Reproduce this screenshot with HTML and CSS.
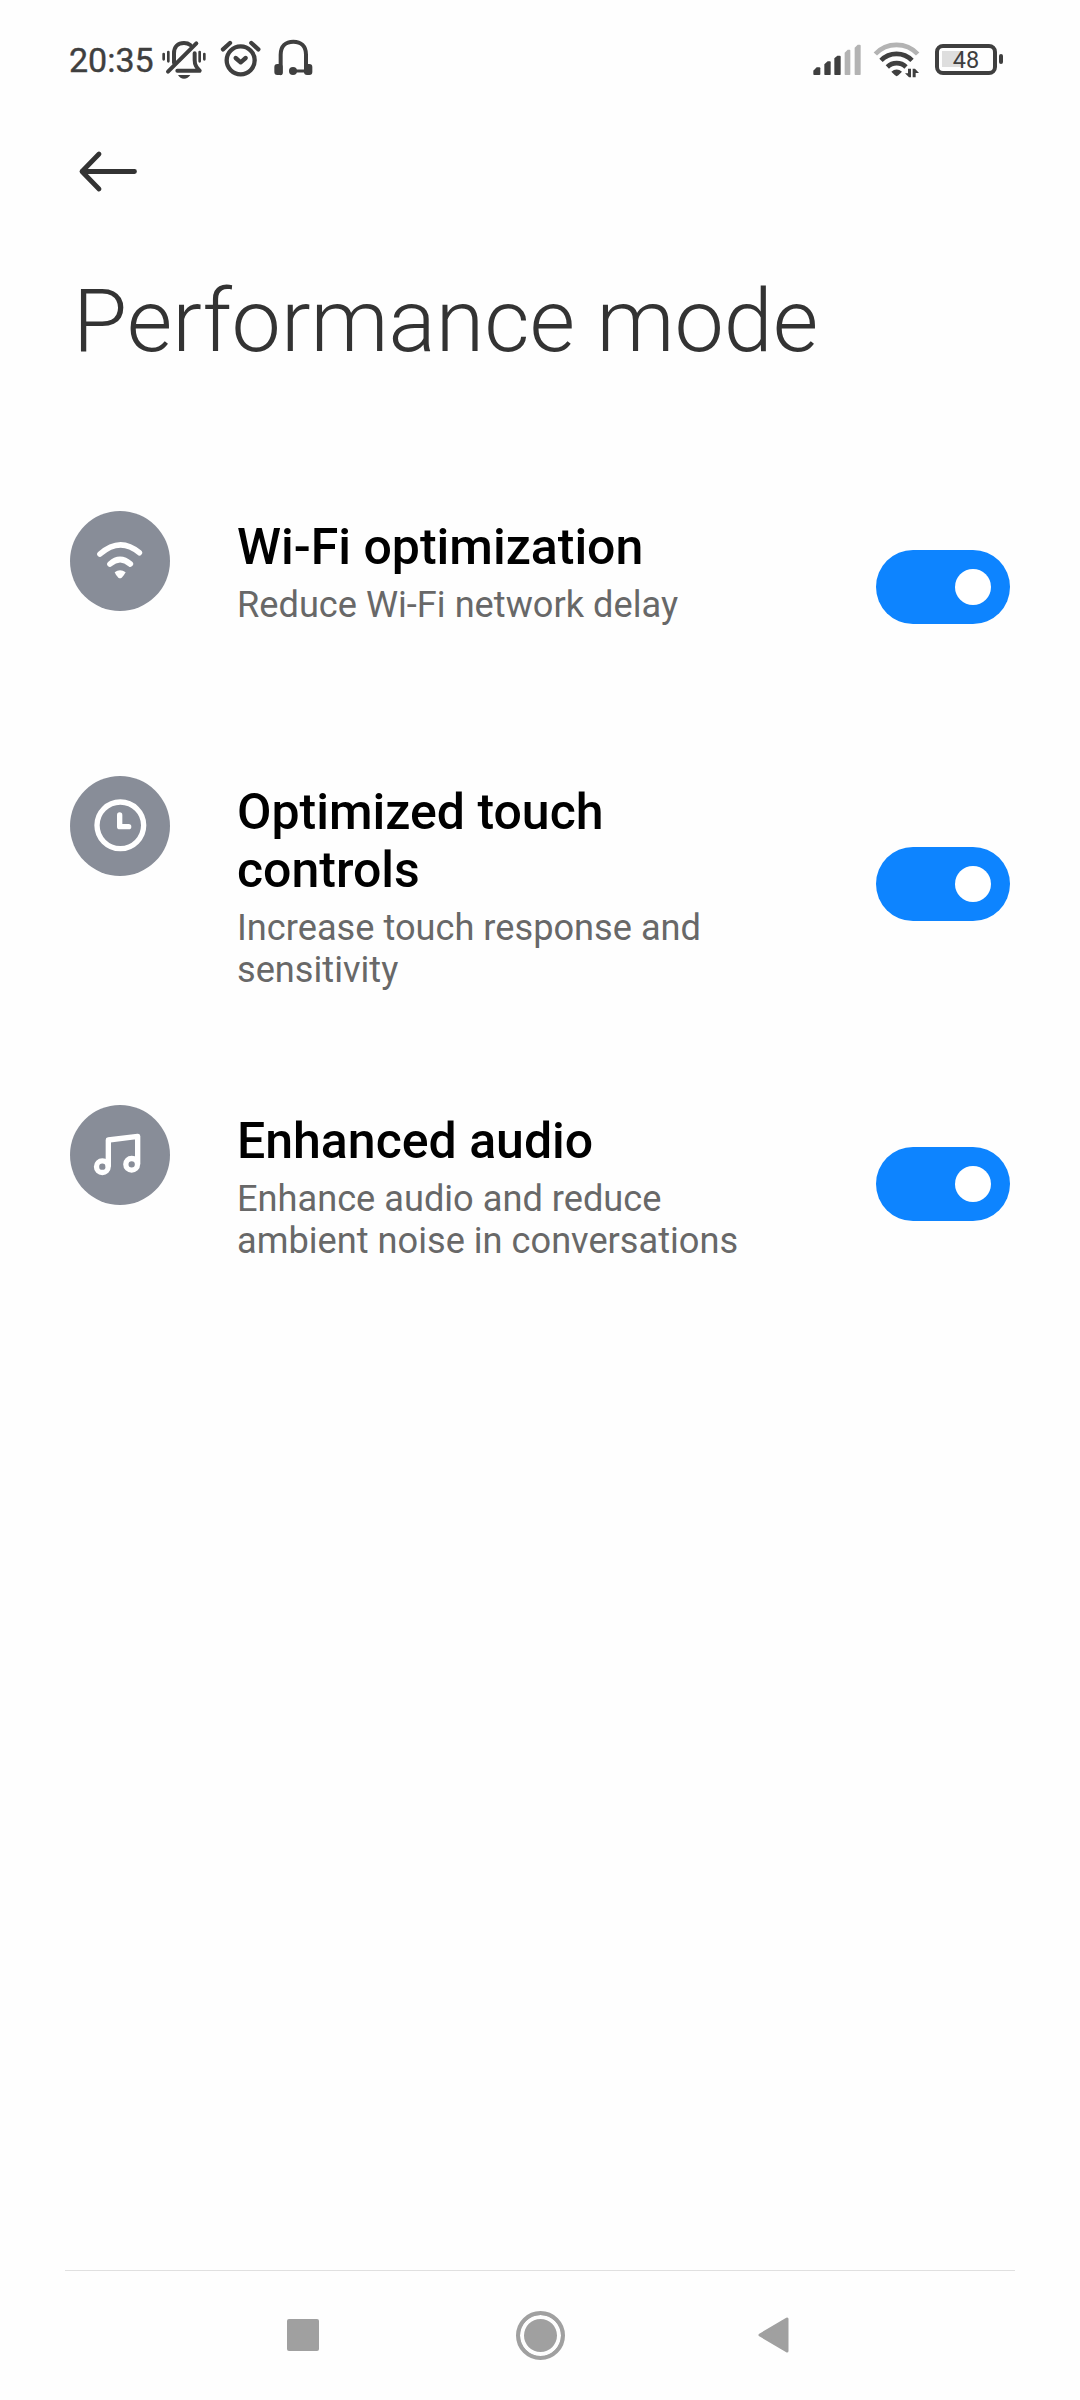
FILE: index.html
```html
<!DOCTYPE html>
<html lang="en">
<head>
    <meta charset="UTF-8">
    <meta name="viewport" content="width=device-width, initial-scale=1.0">
    <title>Performance mode</title>
    <link rel="stylesheet" href="styles.css">
</head>
<body>

<div class="status-bar">
    <span class="time">20:35</span>
    <svg class="icon-bell" width="48" height="42" viewBox="0 0 144 126" fill="none" stroke="#3f3f3f" stroke-width="12" stroke-linecap="round" stroke-linejoin="round">
        <path d="M42 74V46C42 26 54 15 72 15C80 15 86 17 91 21"/>
        <path d="M104 46V66C104 82 110 88 119 98H52"/>
        <path d="M24 101L109 16"/>
        <path d="M11 48V64M25 42V70M119 42V70M133 48V64" stroke-width="8"/>
        <path d="M54 111H91Q84 122 72 122Q60 122 54 111Z" fill="#3f3f3f" stroke="none"/>
    </svg>
    <svg class="icon-alarm" width="42" height="42" viewBox="0 0 126 126" fill="none" stroke="#3f3f3f" stroke-width="13" stroke-linecap="round" stroke-linejoin="round">
        <circle cx="62" cy="67" r="42"/>
        <path d="M9 34L30 15M94 15L115 34"/>
        <path d="M47 60L62 73L77 60"/>
    </svg>
    <svg class="icon-headset" width="42" height="42" viewBox="0 0 126 126" fill="none" stroke="#3f3f3f" stroke-width="12" stroke-linecap="round">
        <path d="M23 106V50C23 24 38 11 61 11S99 24 99 50V100"/>
        <path d="M60 99H100" stroke-width="9"/>
        <circle cx="60" cy="99" r="12" fill="#3f3f3f" stroke="none"/>
        <rect x="4" y="78" width="25" height="33" rx="9" fill="#3f3f3f" stroke="none"/>
        <rect x="93" y="78" width="25" height="33" rx="9" fill="#3f3f3f" stroke="none"/>
    </svg>
    <div class="status-right">
        <svg width="50" height="34" viewBox="0 0 150 102">
            <g fill="#3f3f3f">
                <path d="M4 97V86L14 76H22Q25 76 25 79V97Q25 99 22 99H7Q4 99 4 97Z"/>
                <path d="M37 97V67L47 58H54Q56 58 56 61V97Q56 99 54 99H39Q37 99 37 97Z"/>
                <path d="M67 97V49L76 41H83Q86 41 86 44V97Q86 99 84 99H69Q67 99 67 97Z"/>
            </g>
            <g fill="#b3b3b3">
                <path d="M98 97V32L107 23H113Q115 23 115 26V97Q115 99 113 99H100Q98 99 98 97Z"/>
                <path d="M128 97V17L137 8H143Q146 8 146 11V97Q146 99 144 99H130Q128 99 128 97Z"/>
            </g>
        </svg>
        <svg class="icon-wifi" width="48" height="38" viewBox="0 0 144 114" fill="none" stroke="#3f3f3f" stroke-width="14">
            <path d="M7 39A87 87 0 0 1 134 39" stroke="#b3b3b3"/>
            <path d="M24 58A65 65 0 0 1 117 58"/>
            <path d="M43 78A40 40 0 0 1 99 78"/>
            <path d="M55 92Q71 79 87 92L76 103Q71 108 66 103Z" fill="#3f3f3f" stroke="none"/>
            <path d="M114 83V109H108L96 97H105V83ZM119 109V83H126L138 96H128V109Z" fill="#3f3f3f" stroke="none"/>
        </svg>
        <div class="battery"><span class="battery-level"></span><span class="battery-text">48</span></div>
        <div class="battery-tip"></div>
    </div>
</div>

<header>
    <svg width="64" height="44" viewBox="0 0 64 44" fill="none" stroke="#333" stroke-width="4.8" stroke-linecap="round" stroke-linejoin="round">
        <path d="M61.5 22.5H9M26 5L9 22.5L26 40"/>
    </svg>
    <h1>Performance mode</h1>
</header>

<main>
    <div class="setting">
        <div class="setting-icon">
            <svg width="100" height="100" viewBox="0 0 300 300" fill="none" stroke="#fff" stroke-width="17" stroke-linecap="round">
                <path d="M90 129Q150 76 208 125"/>
                <path d="M120 159Q150 132 181 159"/>
                <path d="M134 184Q150 171 167 184Q162 194 155 200Q150 204 145 200Q138 194 134 184Z" fill="#fff" stroke="none"/>
            </svg>
        </div>
        <div class="setting-text">
            <h2>Wi-Fi optimization</h2>
            <p>Reduce Wi-Fi network delay</p>
        </div>
        <div class="toggle"></div>
    </div>

    <div class="setting">
        <div class="setting-icon">
            <svg width="100" height="100" viewBox="0 0 300 300" fill="none" stroke="#fff" stroke-width="16" stroke-linecap="round" stroke-linejoin="round">
                <circle cx="151" cy="148" r="70"/>
                <path d="M149 117V152H176"/>
            </svg>
        </div>
        <div class="setting-text">
            <h2>Optimized touch controls</h2>
            <p>Increase touch response and sensitivity</p>
        </div>
        <div class="toggle"></div>
    </div>

    <div class="setting">
        <div class="setting-icon">
            <svg width="100" height="100" viewBox="0 0 300 300" fill="none" stroke="#fff" stroke-width="16" stroke-linejoin="round">
                <circle cx="97" cy="185" r="17.5"/>
                <circle cx="185" cy="178" r="17.5"/>
                <path d="M115 185V105L203 94V178"/>
            </svg>
        </div>
        <div class="setting-text">
            <h2>Enhanced audio</h2>
            <p>Enhance audio and reduce ambient noise in conversations</p>
        </div>
        <div class="toggle"></div>
    </div>
</main>

<!-- System navigation -->
<nav>
    <div class="nav-recent"></div>
    <div class="nav-home"></div>
    <svg class="nav-back" width="34" height="40" viewBox="0 0 34 40">
        <path d="M31 4V36L4 20Z" fill="#a0a0a0" stroke="#a0a0a0" stroke-width="3" stroke-linejoin="round"/>
    </svg>
</nav>

</body>
</html>
```

FILE: styles.css
```css
* {
    box-sizing: border-box;
}
body {
    font-family: Roboto, "Liberation Sans", sans-serif;
    background-color: #fefefe;
    margin: 0;
    height: 2400px;
    display: flex;
    flex-direction: column;
}
h1, h2, p {
    margin: 0;
}
svg {
    display: block;
    flex-shrink: 0;
}

/* Status bar */
.status-bar {
    display: flex;
    align-items: flex-start;
    height: 100px;
    padding: 38px 77px 0 69px;
    color: #3f3f3f;
}
.time {
    width: 91px;
    font-size: 34px;
    -webkit-text-stroke: 0.4px #3f3f3f;
    line-height: 44px;
    white-space: nowrap;
}
.icon-alarm {
    margin-left: 12px;
}
.icon-headset {
    margin-left: 11px;
}
.status-right {
    display: flex;
    margin-left: auto;
    padding-top: 4px;
}
.icon-wifi {
    margin-left: 11px;
    margin-top: -1px;
}
.battery {
    position: relative;
    width: 62px;
    height: 31px;
    margin-left: 14px;
    margin-top: 2px;
    border: 4px solid #3f3f3f;
    border-radius: 8px;
}
.battery-level {
    position: absolute;
    left: 3px;
    top: 3px;
    width: 20px;
    height: 16px;
    background-color: #dedede;
}
.battery-text {
    position: relative;
    display: block;
    padding-top: 1px;
    font-size: 23.5px;
    line-height: 23px;
    text-align: center;
}
.battery-tip {
    width: 4px;
    height: 10px;
    margin-left: 2px;
    margin-top: 12px;
    border-radius: 2px;
    background-color: #3f3f3f;
}

/* Page header */
header {
    height: 411px;
    padding: 49px 73px 0;
    color: #333;
}
h1 {
    margin-top: 76px;
    font-size: 88px;
    font-weight: 300;
    line-height: 104px;
    white-space: nowrap;
}

/* Settings list */
main {
    flex: 1;
    display: flex;
    flex-direction: column;
    gap: 114px;
    padding: 0 70px;
}
.setting {
    display: flex;
    min-height: 151px;
}
.setting-icon {
    width: 100px;
    height: 100px;
    border-radius: 50%;
    background-color: #888d98;
}
.setting-text {
    width: 520px;
    margin-left: 67px;
    padding-top: 7px;
}
h2 {
    color: #000;
    font-size: 50px;
    font-weight: 500;
    line-height: 58px;
}
p {
    margin-top: 8px;
    color: #686868;
    font-size: 36.2px;
    line-height: 42px;
}
.toggle {
    display: flex;
    align-items: center;
    justify-content: flex-end;
    align-self: center;
    width: 134px;
    height: 74px;
    margin-left: auto;
    padding-right: 19px;
    border-radius: 37px;
    background-color: #0d84ff;
}
.toggle::after {
    content: "";
    width: 36px;
    height: 36px;
    border-radius: 50%;
    background-color: #fff;
}

/* System navigation */
nav {
    display: flex;
    align-items: center;
    height: 130px;
    margin: 0 65px;
    padding-bottom: 1px;
    padding-left: 222px;
    border-top: 1px solid #e0e0e0;
}
.nav-recent {
    width: 32px;
    height: 32px;
    border-radius: 2px;
    background-color: #a0a0a0;
}
.nav-home {
    width: 49px;
    height: 49px;
    margin-left: 197px;
    border: 4px solid #a0a0a0;
    border-radius: 50%;
    background-color: #a0a0a0;
    box-shadow: inset 0 0 0 4px #fefefe;
}
.nav-back {
    margin-left: 191px;
}
```
